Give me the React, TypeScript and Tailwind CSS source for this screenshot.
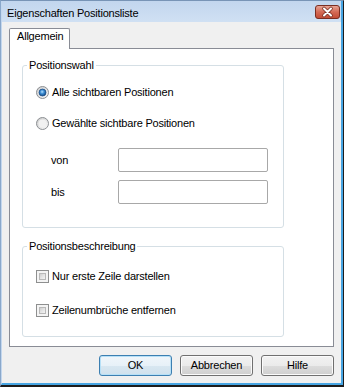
import React from 'react'

function Radio({ id, checked }: { id: string; checked?: boolean }) {
  return (
    <svg width="13" height="13" viewBox="0 0 13 13" className="shrink-0">
      <defs>
        <linearGradient id={`${id}-ring`} x1="0" y1="0" x2="1" y2="1">
          <stop offset="0" stopColor="#c9c9c9" />
          <stop offset="1" stopColor="#fbfbfb" />
        </linearGradient>
        <radialGradient id={`${id}-dot`} cx="0.45" cy="0.4" r="0.6">
          <stop offset="0" stopColor="#b7e0fb" />
          <stop offset="0.45" stopColor="#3d8fd6" />
          <stop offset="1" stopColor="#154a86" />
        </radialGradient>
      </defs>
      <circle cx="6.5" cy="6.5" r="6" fill={`url(#${id}-ring)`} stroke="#8c8f93" />
      <circle cx="6.5" cy="6.5" r="4" fill="#f1f1f1" />
      {checked && <circle cx="6.5" cy="6.5" r="3.5" fill={`url(#${id}-dot)`} stroke="#1d4f88" strokeWidth="0.8" />}
    </svg>
  )
}

function Check() {
  return (
    <div className="w-[13px] h-[13px] shrink-0 border border-[#8e8f8f] bg-[#f4f4f4] p-[2px]">
      <div className="w-full h-full border border-[#b9b9b9] bg-[linear-gradient(135deg,#cfcfcf_0%,#e4e4e4_50%,#f3f3f3_100%)]" />
    </div>
  )
}

function Group({ title, className, children }: { title: string; className: string; children: React.ReactNode }) {
  return (
    <div className={`relative w-[262px] border border-[#d5dfe5] rounded-[3px] ${className}`}>
      <span className="absolute left-[4px] top-[-7px] px-[2px] bg-white leading-[13px]">{title}</span>
      {children}
    </div>
  )
}

function Field({ label, className = '' }: { label: string; className?: string }) {
  return (
    <div className={`flex items-center ml-[15px] ${className}`}>
      <span className="w-[67px] leading-[13px]">{label}</span>
      <div className="w-[150px] h-[24px] border border-[#a8a8a8] rounded-[2px] bg-white" />
    </div>
  )
}

const buttons = ['OK', 'Abbrechen', 'Hilfe']

export default function App() {
  return (
    <div className="w-[344px] h-[387px] border-t border-l border-r border-b-2 border-t-[#7894b6] border-l-[#8aa8cb] border-r-[#1c1c1c] border-b-[#1c1c1c] font-['Liberation_Sans',Arial,sans-serif] text-[11px] tracking-[-0.2px] text-black">
      <div className="h-full flex flex-col border-l border-r-2 border-b-2 border-l-[#c3d7ee] border-r-[#47a5e3] border-b-[#47a5e3] bg-[#f0f0f0]">
        {/* title bar */}
        <div className="h-[21px] flex justify-between items-center pl-[5px] pr-[1px] bg-[linear-gradient(to_bottom,#c2d6ee,#d0e0f3)]">
          <span className="self-start mt-[6px] leading-[13px]">Eigenschaften Positionsliste</span>
          <svg width="25" height="14" viewBox="0 0 25 14">
            <defs>
              <linearGradient id="close" x1="0" y1="0" x2="0" y2="1">
                <stop offset="0" stopColor="#e8a89a" />
                <stop offset="0.5" stopColor="#d46a55" />
                <stop offset="1" stopColor="#c24a33" />
              </linearGradient>
            </defs>
            <rect x="0.5" y="0.5" width="24" height="13" rx="2.5" fill="url(#close)" stroke="#7a2e22" />
            <path d="M9 3.5 L16 10.5 M16 3.5 L9 10.5" stroke="#7b3226" strokeWidth="3.6" strokeLinecap="round" />
            <path d="M9 3.5 L16 10.5 M16 3.5 L9 10.5" stroke="#ffffff" strokeWidth="2" strokeLinecap="round" />
          </svg>
        </div>

        {/* body */}
        <div className="flex-1 flex flex-col px-[7px] pt-[6px]">
          <div className="relative z-10 -mb-px w-[61px] h-[21px] border border-b-0 border-[#898c95] rounded-t-[2px] bg-white pl-[7px] pt-[1px] leading-[13px]">
            Allgemein
          </div>
          <div className="w-[325px] h-[299px] border border-[#898c95] bg-white flex flex-col pl-[12px] pt-[16px]">
            <Group title="Positionswahl" className="h-[163px] pl-[13px] pt-[20px]">
              <div className="flex items-center gap-[3px] leading-[13px]">
                <Radio id="r1" checked />
                <span>Alle sichtbaren Positionen</span>
              </div>
              <div className="flex items-center gap-[3px] leading-[13px] mt-[18px]">
                <Radio id="r2" />
                <span>Gewählte sichtbare Positionen</span>
              </div>
              <Field label="von" className="mt-[18px]" />
              <Field label="bis" className="mt-[8px]" />
            </Group>

            <Group title="Positionsbeschreibung" className="h-[91px] mt-[18px] pl-[13px] pt-[23px]">
              <div className="flex items-center gap-[3px] leading-[13px]">
                <Check />
                <span>Nur erste Zeile darstellen</span>
              </div>
              <div className="flex items-center gap-[3px] leading-[13px] mt-[21px]">
                <Check />
                <span>Zeilenumbrüche entfernen</span>
              </div>
            </Group>
          </div>

          <div className="flex justify-end gap-[8px] mt-[8px]">
            {buttons.map((b, i) => (
              <div
                key={b}
                className={`w-[73px] h-[21px] flex items-center justify-center rounded-[3px] border leading-[13px] ${
                  i === 0
                    ? 'border-[#3c7fb1] shadow-[inset_0_0_0_1px_#b6e0f7] bg-[linear-gradient(to_bottom,#f0f6fa_0%,#e7f1f8_50%,#d8e7f1_51%,#cfe1ed_100%)]'
                    : 'border-[#707070] shadow-[inset_0_0_0_1px_#fbfbfb] bg-[linear-gradient(to_bottom,#f2f2f2_0%,#ebebeb_50%,#dddddd_51%,#cfcfcf_100%)]'
                }`}
              >
                {b}
              </div>
            ))}
          </div>
        </div>
      </div>
    </div>
  )
}
